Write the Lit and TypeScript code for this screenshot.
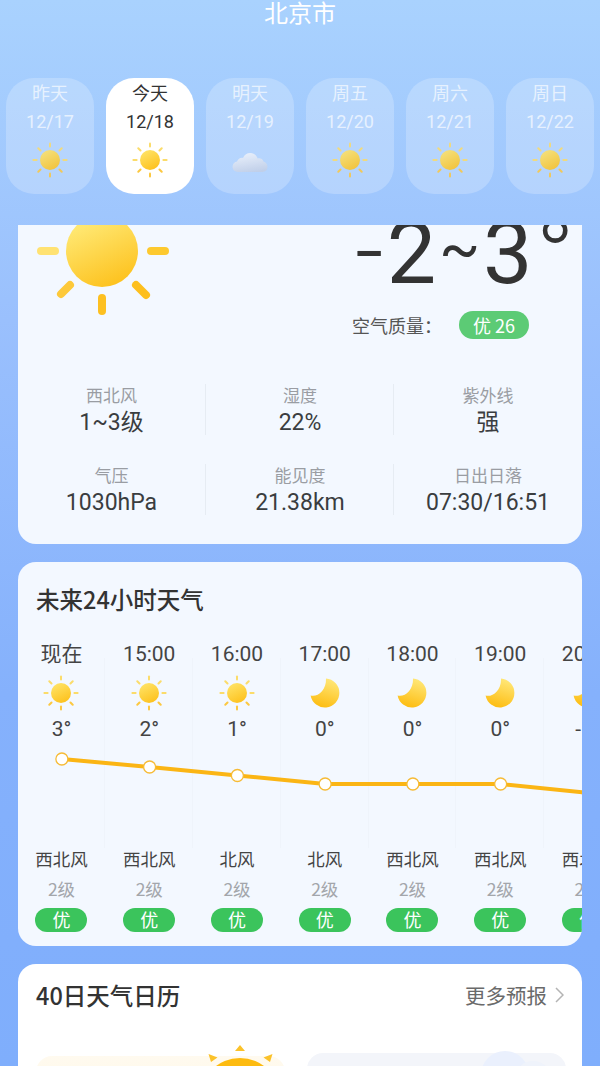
import { LitElement, html, css, svg } from 'lit';
import { customElement } from 'lit/decorators.js';

const days = [
  { name: '昨天', date: '12/17', icon: 'sun' },
  { name: '今天', date: '12/18', icon: 'sun', active: true },
  { name: '明天', date: '12/19', icon: 'cloud' },
  { name: '周五', date: '12/20', icon: 'sun' },
  { name: '周六', date: '12/21', icon: 'sun' },
  { name: '周日', date: '12/22', icon: 'sun' },
];

const stats = [
  { label: '西北风', value: '1~3级' },
  { label: '湿度', value: '22%' },
  { label: '紫外线', value: '强' },
  { label: '气压', value: '1030hPa' },
  { label: '能见度', value: '21.38km' },
  { label: '日出日落', value: '07:30/16:51' },
];

const hours = [
  { time: '现在', icon: 'sun', temp: '3°', wind: '西北风', y: 17 },
  { time: '15:00', icon: 'sun', temp: '2°', wind: '西北风', y: 25 },
  { time: '16:00', icon: 'sun', temp: '1°', wind: '北风', y: 33.5 },
  { time: '17:00', icon: 'moon', temp: '0°', wind: '北风', y: 42 },
  { time: '18:00', icon: 'moon', temp: '0°', wind: '西北风', y: 42 },
  { time: '19:00', icon: 'moon', temp: '0°', wind: '西北风', y: 42 },
  { time: '20:00', icon: 'moon', temp: '-1°', wind: '西北风', y: 51 },
];

const COL_W = 87.75;

const rays = [0, 45, 90, 135, 180, 225, 270, 315];

function sunIcon() {
  return html`<svg class="icon" viewBox="0 0 36 36">
    <defs>
      <linearGradient id="sun-fill" x1="0.2" y1="0" x2="0.7" y2="1">
        <stop offset="0" stop-color="#ffe468" />
        <stop offset="1" stop-color="#fdc11c" />
      </linearGradient>
    </defs>
    ${rays.map(
      (a) => svg`<line x1="18" y1="1.4" x2="18" y2="4.6" transform="rotate(${a} 18 18)"
        stroke=${a > 90 && a < 270 ? '#fcc840' : '#fbdc6a'} stroke-width="2" stroke-linecap="round" />`
    )}
    <circle cx="18" cy="18" r="10" fill="url(#sun-fill)" />
  </svg>`;
}

function moonIcon() {
  return html`<svg class="icon" viewBox="0 0 36 36">
    <defs>
      <linearGradient id="moon-fill" x1="0.7" y1="0" x2="0.4" y2="1">
        <stop offset="0" stop-color="#ffe87a" />
        <stop offset="1" stop-color="#fdbd12" />
      </linearGradient>
    </defs>
    <path d="M19 3.500A14.500 14.500 0 1 1 3.600 20.500C10 22.500 19.500 16 19 3.500Z" fill="url(#moon-fill)" />
  </svg>`;
}

function cloudIcon() {
  return html`<svg class="icon" viewBox="0 0 36 36">
    <defs>
      <linearGradient id="cloud-fill" x1="0.3" y1="0" x2="0.6" y2="1">
        <stop offset="0" stop-color="#f2f5fb" />
        <stop offset="1" stop-color="#c3cfe6" />
      </linearGradient>
    </defs>
    <path d="M6 30C2.800 30 0.500 27.700 0.500 24.800C0.500 22 2.500 20 5 19.600C6 16.600 8.600 15.400 11 15.900C12.400 12.800 15 11 18.400 11C22 11 24.800 13.400 25.700 16.500C28 15.800 30.600 16.700 31.500 19.400C33.800 20 35.500 22.200 35.500 24.800C35.500 27.700 33.400 30 30.500 30Z" fill="url(#cloud-fill)" />
  </svg>`;
}

function weatherIcon(name: string) {
  if (name === 'moon') return moonIcon();
  if (name === 'cloud') return cloudIcon();
  return sunIcon();
}

@customElement('app-root')
export class AppRoot extends LitElement {
  static styles = css`
    :host {
      display: block;
      width: 600px;
      height: 1066px;
      overflow: hidden;
      font-family: "Noto Sans CJK SC", sans-serif;
      background: linear-gradient(180deg, #a9d2fe 0%, #9ac0fd 30%, #85b1fc 65%, #7faefc 100%);
      color: #333;
    }
    .city {
      height: 78px;
      margin: 0;
      text-align: center;
      color: #fff;
      font-size: 24px;
      font-weight: 400;
      line-height: 23px;
    }
    .tabs {
      display: flex;
      gap: 12px;
      padding: 0 6px;
      height: 147px;
      box-sizing: border-box;
    }
    .tab {
      width: 88px;
      height: 116px;
      flex: none;
      box-sizing: border-box;
      border-radius: 28px;
      background: rgba(255, 255, 255, 0.22);
      color: rgba(255, 255, 255, 0.68);
      display: flex;
      flex-direction: column;
      align-items: center;
      padding-top: 1px;
      font-size: 18px;
    }
    .tab.active {
      background: #fff;
      color: #333;
    }
    .tab:not(.active) .icon {
      opacity: 0.85;
    }
    .tab-name,
    .tab-date {
      line-height: 26px;
    }
    .tab-date {
      margin-top: 4px;
      font-family: Roboto, sans-serif;
    }
    .tab .icon {
      width: 36px;
      height: 36px;
      margin-top: 7px;
    }
    .scroll {
      height: 841px;
      overflow: hidden;
      padding: 0 18px;
    }
    .card {
      background: #f3f8ff;
      border-radius: 18px;
      margin-bottom: 18px;
    }
    .today {
      margin-top: -60px;
      height: 379px;
      box-sizing: border-box;
    }
    .hero {
      display: flex;
      justify-content: space-between;
      height: 219px;
    }
    .hero-sun {
      width: 140px;
      height: 140px;
      margin: 16px 0 0 18px;
      flex: none;
    }
    .hero-right {
      display: flex;
      flex-direction: column;
      align-items: flex-start;
      width: 230px;
      flex: none;
    }
    .temp {
      font-family: Roboto, sans-serif;
      font-size: 88px;
      font-weight: 400;
      line-height: 90px;
      height: 90px;
      margin: 43px 0 0 3px;
      letter-spacing: 3px;
      color: #333;
      white-space: nowrap;
    }
    .dash {
      font-size: 100px;
      font-weight: 300;
      vertical-align: -2px;
      line-height: 0;
    }
    .tilde {
      font-size: 60px;
      vertical-align: 14px;
      line-height: 0;
    }
    .deg {
      font-size: 104px;
      font-weight: 300;
      vertical-align: -10px;
      line-height: 0;
    }
    .air {
      display: flex;
      align-items: center;
      margin-top: 13px;
      font-size: 18px;
      color: #555;
    }
    .air-label {
      width: 107px;
    }
    .air-badge {
      width: 70px;
      height: 28px;
      line-height: 28px;
      border-radius: 14px;
      background: #5ccb75;
      color: #fff;
      text-align: center;
    }
    .stats {
      display: grid;
      grid-template-columns: repeat(3, 188px);
      row-gap: 29px;
    }
    .stat {
      height: 51px;
      display: flex;
      flex-direction: column;
      align-items: center;
      border-left: 1px solid #e6ecf3;
      margin-left: -1px;
    }
    .stat:nth-child(3n + 1) {
      border-left: none;
    }
    .stat-label {
      font-size: 17px;
      line-height: 22px;
      color: #9a9da3;
    }
    .stat-value {
      margin-top: 2px;
      font-size: 23px;
      line-height: 30px;
      color: #3a3d40;
      font-family: Roboto, "Noto Sans CJK SC", sans-serif;
    }
    .section-title {
      margin: 0;
      padding: 22px 18px 0;
      font-size: 23.5px;
      line-height: 30px;
      font-weight: 500;
      color: #333;
    }
    .hourly {
      height: 384px;
      overflow: hidden;
    }
    .hours {
      position: relative;
      display: flex;
      margin: 26px 0 0 -0.4px;
    }
    .hour {
      position: relative;
      flex: none;
      display: flex;
      flex-direction: column;
      align-items: center;
      height: 292px;
    }
    .hour::after {
      content: '';
      position: absolute;
      top: 18px;
      bottom: 84px;
      right: 0;
      width: 1px;
      background: #eff4fb;
    }
    .hour-time,
    .hour-temp {
      font-family: Roboto, "Noto Sans CJK SC", sans-serif;
      font-size: 21px;
      line-height: 28px;
      color: #444;
      white-space: nowrap;
    }
    .hour .icon {
      width: 36px;
      height: 36px;
      margin: 7px 0 4px;
      flex: none;
    }
    .hour-wind {
      margin-top: 102px;
      font-size: 17.5px;
      line-height: 28px;
      color: #444;
      white-space: nowrap;
    }
    .hour-level {
      margin-top: 2px;
      font-size: 17.5px;
      line-height: 28px;
      color: #a3a6ab;
    }
    .hour-badge {
      margin-top: 5px;
      width: 52px;
      height: 24px;
      line-height: 23px;
      border-radius: 12px;
      background: #3bc45c;
      color: #fff;
      text-align: center;
      font-size: 18px;
      flex: none;
    }
    .line {
      position: absolute;
      left: 0;
      top: 102px;
      width: 564px;
      height: 70px;
      z-index: 1;
    }
    .calendar {
      background: #fff;
      height: 200px;
    }
    .calendar-head {
      display: flex;
      justify-content: space-between;
      align-items: center;
      padding: 16px 18px 0;
      height: 30px;
    }
    .calendar-head .section-title {
      padding: 0;
    }
    .more {
      display: flex;
      align-items: center;
      gap: 8px;
      font-size: 20.5px;
      color: #6a6a6a;
    }
    .more svg {
      width: 9px;
      height: 16px;
    }
    .panels {
      display: flex;
      gap: 22px;
      padding: 43px 16px 0 18px;
    }
    .panel-sun {
      position: relative;
      width: 249px;
      height: 80px;
      border-radius: 16px;
      background: linear-gradient(180deg, #fffaef, #fff6e0);
      margin-top: 3px;
      flex: none;
    }
    .panel-sun svg {
      position: absolute;
      left: 153.500px;
      top: -15px;
      width: 100px;
      height: 60px;
    }
    .panel-cloud {
      position: relative;
      flex: 1;
      height: 80px;
      border-radius: 16px;
      background: #f3f5fa;
    }
    .panel-cloud svg {
      position: absolute;
      left: 170px;
      top: -4px;
      width: 80px;
      height: 40px;
    }
  `;

  render() {
    const points = hours.map((h, i) => [COL_W * i + COL_W / 2, h.y]);
    return html`
      <h1 class="city">北京市</h1>
      <div class="tabs">
        ${days.map(
          (d) => html`
            <div class="tab ${d.active ? 'active' : ''}">
              <span class="tab-name">${d.name}</span>
              <span class="tab-date">${d.date}</span>
              ${weatherIcon(d.icon)}
            </div>
          `
        )}
      </div>
      <div class="scroll">
        <section class="card today">
          <div class="hero">
            <svg class="hero-sun" viewBox="0 0 140 140">
              <defs>
                <linearGradient id="hero-fill" x1="0.25" y1="0" x2="0.7" y2="1">
                  <stop offset="0" stop-color="#ffec7c" />
                  <stop offset="1" stop-color="#fdc11c" />
                </linearGradient>
              </defs>
              <circle cx="66" cy="70" r="36" fill="url(#hero-fill)" />
              <g stroke-width="8" stroke-linecap="round" fill="none">
                <line x1="5" y1="70" x2="19" y2="70" stroke="#ffe272" />
                <line x1="115" y1="70" x2="129" y2="70" stroke="#fdc92f" />
                <line x1="25" y1="113" x2="34" y2="104" stroke="#fdc93a" />
                <line x1="100" y1="104" x2="110" y2="114" stroke="#fdbf1e" />
                <line x1="66" y1="117" x2="66" y2="130" stroke="#fdc021" />
              </g>
            </svg>
            <div class="hero-right">
              <div class="temp"><span class="dash">-</span>2<span class="tilde">~</span>3<span class="deg">°</span></div>
              <div class="air">
                <span class="air-label">空气质量：</span>
                <span class="air-badge">优 26</span>
              </div>
            </div>
          </div>
          <div class="stats">
            ${stats.map(
              (s) => html`
                <div class="stat">
                  <span class="stat-label">${s.label}</span>
                  <span class="stat-value">${s.value}</span>
                </div>
              `
            )}
          </div>
        </section>

        <section class="card hourly">
          <h2 class="section-title">未来24小时天气</h2>
          <div class="hours">
            ${hours.map(
              (h) => html`
                <div class="hour" style="width:${COL_W}px">
                  <span class="hour-time">${h.time}</span>
                  ${weatherIcon(h.icon)}
                  <span class="hour-temp">${h.temp}</span>
                  <span class="hour-wind">${h.wind}</span>
                  <span class="hour-level">2级</span>
                  <span class="hour-badge">优</span>
                </div>
              `
            )}
            <svg class="line" viewBox="0 0 564 70">
              <polyline
                points=${points.map((p) => p.join(',')).join(' ')}
                fill="none"
                stroke="#fbb514"
                stroke-width="4"
              />
              ${points.map(
                (p) => svg`<circle cx=${p[0]} cy=${p[1]} r="6" fill="#fff" stroke="#f6bb36" stroke-width="1.300" />`
              )}
            </svg>
          </div>
        </section>

        <section class="card calendar">
          <div class="calendar-head">
            <h2 class="section-title">40日天气日历</h2>
            <span class="more">
              更多预报
              <svg viewBox="0 0 9 16"><path d="M1 1L8 8L1 15" fill="none" stroke="#b4b4b4" stroke-width="1.500" /></svg>
            </span>
          </div>
          <div class="panels">
            <div class="panel-sun">
              <svg viewBox="0 0 100 60">
                <circle cx="50" cy="57" r="40" fill="#fdbb10" />
                <path d="M50 4L55 10H45Z M18.500 13L27.500 16.500L21 21Z M82.500 13L73.500 16.500L80 21Z" fill="#fbc22a" />
              </svg>
            </div>
            <div class="panel-cloud">
              <svg viewBox="0 0 80 40">
                <circle cx="28" cy="26" r="24" fill="#eaf0fd" />
                <circle cx="56" cy="30" r="18" fill="#eff3fb" />
              </svg>
            </div>
          </div>
        </section>
      </div>
    `;
  }
}
